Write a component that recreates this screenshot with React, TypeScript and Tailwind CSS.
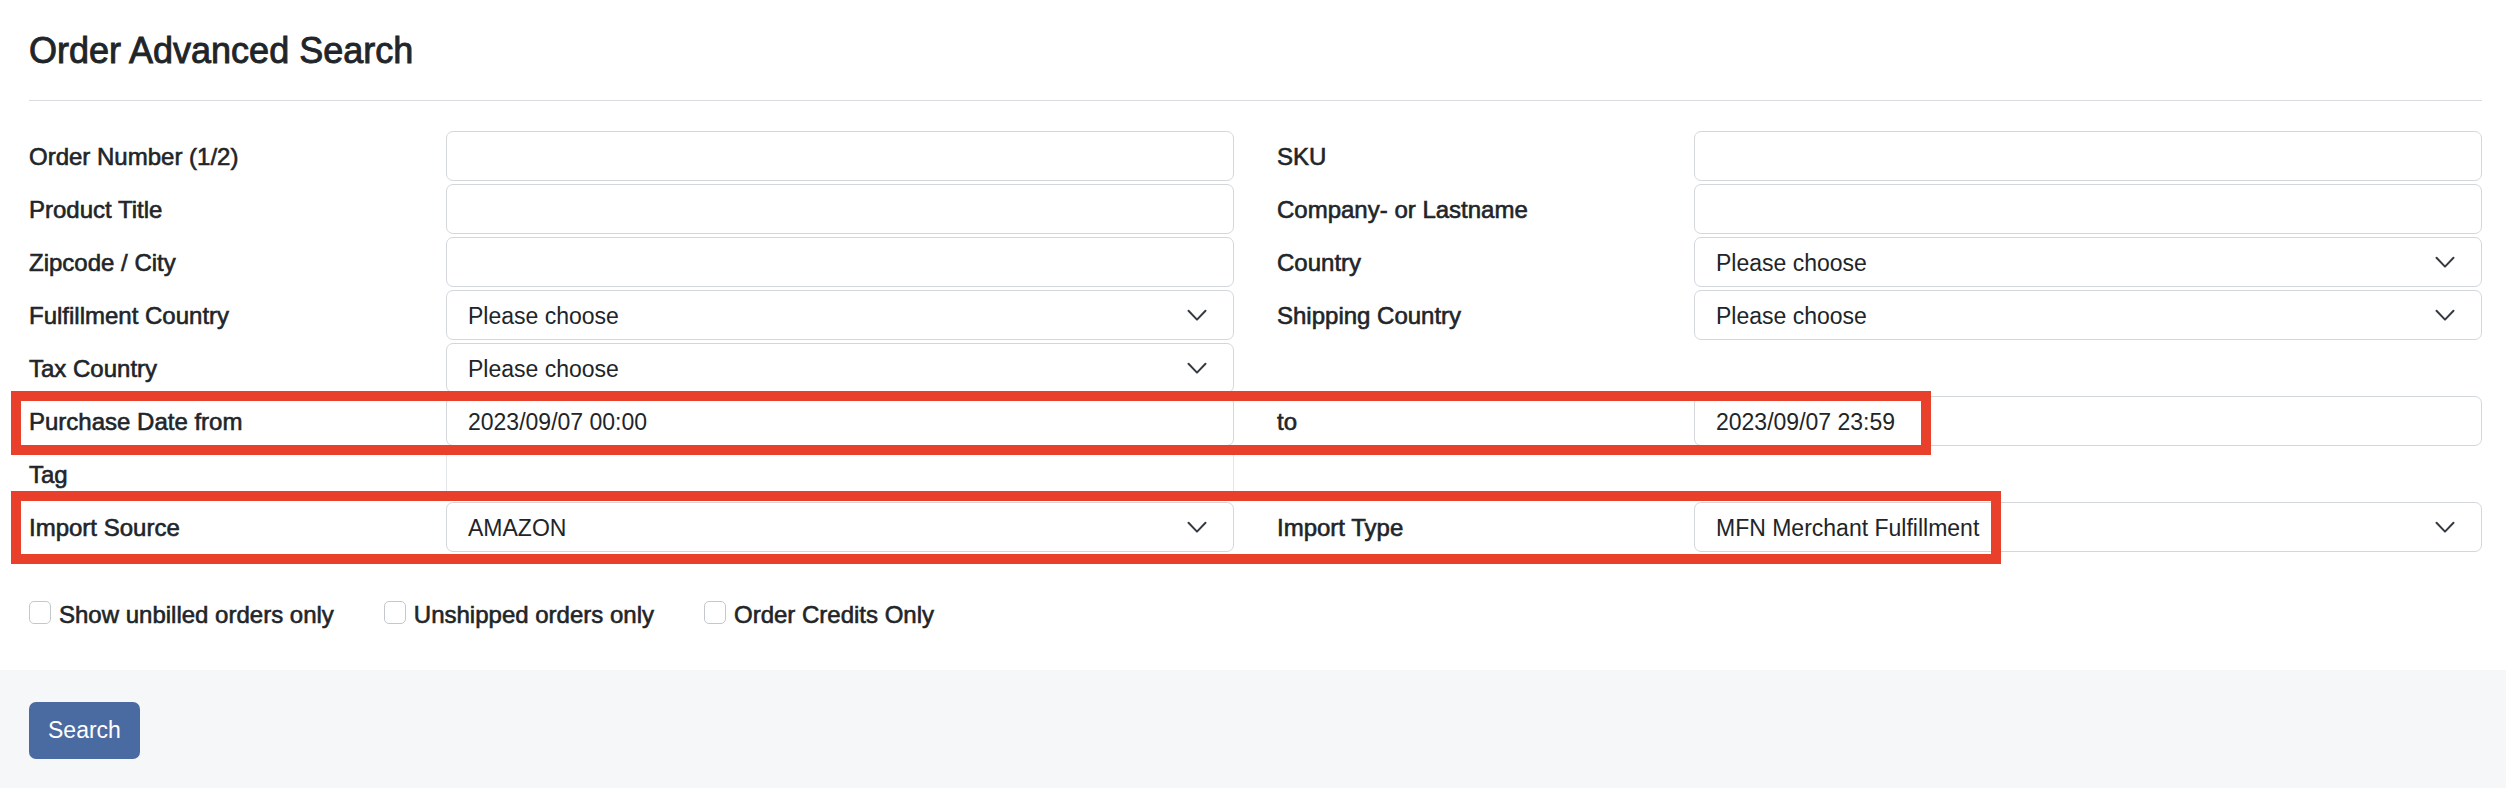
import { Fragment } from "react";

type Field = {
  label: string;
  kind: "input" | "select";
  value?: string;
  faint?: boolean;
};

type Row = [Field, Field | null];

const rows: Row[] = [
  [
    { label: "Order Number (1/2)", kind: "input" },
    { label: "SKU", kind: "input" },
  ],
  [
    { label: "Product Title", kind: "input" },
    { label: "Company- or Lastname", kind: "input" },
  ],
  [
    { label: "Zipcode / City", kind: "input" },
    { label: "Country", kind: "select", value: "Please choose" },
  ],
  [
    { label: "Fulfillment Country", kind: "select", value: "Please choose" },
    { label: "Shipping Country", kind: "select", value: "Please choose" },
  ],
  [{ label: "Tax Country", kind: "select", value: "Please choose" }, null],
  [
    { label: "Purchase Date from", kind: "input", value: "2023/09/07 00:00" },
    { label: "to", kind: "input", value: "2023/09/07 23:59" },
  ],
  [{ label: "Tag", kind: "input", faint: true }, null],
  [
    { label: "Import Source", kind: "select", value: "AMAZON" },
    { label: "Import Type", kind: "select", value: "MFN Merchant Fulfillment" },
  ],
];

const checks = ["Show unbilled orders only", "Unshipped orders only", "Order Credits Only"];

function Chevron() {
  return (
    <svg width="20" height="13" viewBox="0 0 20 13" fill="none" className="shrink-0">
      <path d="M1.5 1.8 10 10.6 18.5 1.8" stroke="#343a40" strokeWidth="2" strokeLinecap="round" strokeLinejoin="round" />
    </svg>
  );
}

function Control({ field }: { field: Field }) {
  const border = field.faint ? "border-[#e4e7ea]" : "border-[#d3d7dc]";
  if (field.kind === "select") {
    return (
      <div className={`flex h-[50px] items-center justify-between rounded-[7px] border ${border} bg-white pl-[21px] pr-[26px] text-[23px] text-[#212529]`}>
        <span className="pt-[2px]">{field.value}</span>
        <Chevron />
      </div>
    );
  }
  return (
    <input
      readOnly
      value={field.value ?? ""}
      className={`h-[50px] w-full rounded-[7px] border ${border} bg-white px-[21px] pt-[2px] text-[23px] text-[#212529] outline-none`}
    />
  );
}

function Half({ field }: { field: Field | null }) {
  if (!field) return <div />;
  return (
    <div className="grid grid-cols-[417px_1fr] items-center">
      <span className="pt-[2px] text-[24px] text-[#212529] [-webkit-text-stroke:0.6px_#212529]">{field.label}</span>
      <Control field={field} />
    </div>
  );
}

export default function App() {
  return (
    <div className="relative flex min-h-[788px] flex-col bg-white font-['Liberation_Sans',Arial,sans-serif] text-[#212529]">
      <div className="pl-[29px] pr-[24px] pt-[30px]">
        <h1 className="text-[36px] leading-[42px] [-webkit-text-stroke:0.9px_#212529]">Order Advanced Search</h1>
        <hr className="mt-[28px] border-0 border-t border-[#d9dcdf]" />

        <div className="mt-[30px] flex flex-col gap-[3px]">
          {rows.map(([left, right]) => (
            <div key={left.label} className="grid grid-cols-2 gap-x-[43px]">
              <Half field={left} />
              <Half field={right} />
            </div>
          ))}
        </div>

        <div className="mb-[41px] mt-[47px] flex h-[30px] items-center gap-[50px]">
          {checks.map((c) => (
            <label key={c} className="flex items-center gap-[8px]">
              <span className="mb-[4px] h-[23px] w-[22px] rounded-[5px] border border-[#c4c8cd] bg-white" />
              <span className="pt-[2px] text-[24px] [-webkit-text-stroke:0.6px_#212529]">{c}</span>
            </label>
          ))}
        </div>
      </div>

      <div className="flex-1 bg-[#f6f7f9] pl-[29px] pt-[32px]">
        <button
          type="button"
          className="h-[57px] rounded-[7px] bg-[#4a6ba2] px-[19px] text-[23px] text-white"
        >
          Search
        </button>
      </div>

      <Fragment>
        <div className="pointer-events-none absolute left-[11px] top-[391px] h-[64px] w-[1920px] border-[10px] border-[#e8402a]" />
        <div className="pointer-events-none absolute left-[11px] top-[491px] h-[73px] w-[1990px] border-[10px] border-[#e8402a]" />
      </Fragment>
    </div>
  );
}
